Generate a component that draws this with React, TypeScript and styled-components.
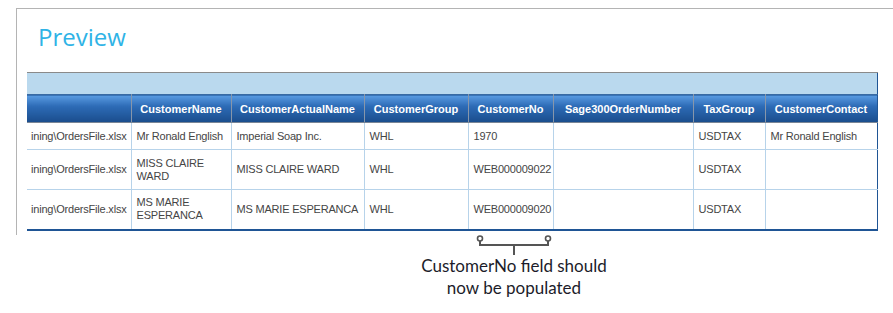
import React from "react";
import styled, { createGlobalStyle } from "styled-components";

const GlobalStyle = createGlobalStyle`
  body {
    margin: 0;
    background: #ffffff;
  }
`;

const Page = styled.div`
  width: 893px;
  height: 313px;
  overflow: hidden;
  background: #fff;
`;

const Frame = styled.div`
  margin: 8px 0 0 16px;
  width: 866px;
  height: 226px;
  border-top: 1px solid #b4b4b4;
  border-left: 1px solid #b4b4b4;
  padding-left: 10px;
`;

const Title = styled.h1`
  margin: 0;
  padding: 12px 0 0 11px;
  height: 51px;
  font-family: "Open Sans", "DejaVu Sans", sans-serif;
  font-weight: 400;
  font-size: 24px;
  line-height: 32px;
  color: #2fb3e6;
`;

const Grid = styled.table`
  border-collapse: collapse;
  table-layout: fixed;
  width: 850px;
  font-family: "Liberation Sans", Arial, sans-serif;
  font-size: 11px;
  border-right: 1px solid #1f5595;
  border-bottom: 2px solid #1f5595;
`;

const BandRow = styled.tr`
  height: 22px;
  background: #bad9ee;
  border-top: 1px solid #8a8a8a;
  border-bottom: 1px solid #3a6ba3;
`;

const HeadCell = styled.th`
  height: 27px;
  padding: 0 4px;
  background: linear-gradient(#5a9ce2 0%, #2d6bb6 40%, #1a4d8c 100%);
  color: #fff;
  font-weight: 700;
  text-align: center;
  white-space: nowrap;
  border-left: 1px solid #8796aa;
  border-bottom: 1px solid #7a8696;
  &:first-child {
    border-left: none;
  }
`;

const Row = styled.tr<{ tall?: boolean }>`
  height: ${({ tall }) => (tall ? 40 : 27)}px;
`;

const Cell = styled.td`
  padding: 0 3px 0 5px;
  color: #454545;
  line-height: 13px;
  letter-spacing: -0.2px;
  vertical-align: middle;
  border-left: 1px solid #b7d3ea;
  border-bottom: 1px solid #b7d3ea;
  &:first-child {
    border-left: none;
  }
`;

const PathCell = styled(Cell)`
  padding: 0 4px 0 0;
  white-space: nowrap;
  text-align: right;
`;

const Annotation = styled.div`
  width: 240px;
  margin-left: 394px;
  display: flex;
  flex-direction: column;
  align-items: center;
`;

const Note = styled.div`
  margin-top: -2px;
  font-family: "Lato", "DejaVu Sans", sans-serif;
  font-size: 17px;
  line-height: 22px;
  color: #1c1c2a;
  text-align: center;
`;

const columns = [
  { title: "", w: 104 },
  { title: "CustomerName", w: 100 },
  { title: "CustomerActualName", w: 133 },
  { title: "CustomerGroup", w: 104 },
  { title: "CustomerNo", w: 85 },
  { title: "Sage300OrderNumber", w: 140 },
  { title: "TaxGroup", w: 72 },
  { title: "CustomerContact", w: 112 },
];

const rows = [
  { tall: false, cells: ["Mr Ronald English", "Imperial Soap Inc.", "WHL", "1970", "", "USDTAX", "Mr Ronald English"] },
  { tall: true, cells: ["MISS CLAIRE WARD", "MISS CLAIRE WARD", "WHL", "WEB000009022", "", "USDTAX", ""] },
  { tall: true, cells: ["MS MARIE ESPERANCA", "MS MARIE ESPERANCA", "WHL", "WEB000009020", "", "USDTAX", ""] },
];

const Bracket = () => (
  <svg width="80" height="22" viewBox="0 0 80 22">
    <g stroke="#555" strokeWidth="2" fill="none">
      <path d="M6 6 V10 H74 V6" />
      <path d="M40 10 V20" />
      <circle cx="6" cy="3.5" r="2.5" fill="#fff" strokeWidth="1.6" />
      <circle cx="74" cy="3.5" r="2.5" fill="#fff" strokeWidth="1.6" />
    </g>
  </svg>
);

export default function App() {
  return (
    <Page>
      <GlobalStyle />
      <Frame>
        <Title>Preview</Title>
        <Grid>
          <colgroup>
            {columns.map((c, i) => (
              <col key={i} style={{ width: c.w }} />
            ))}
          </colgroup>
          <thead>
            <BandRow>
              <td colSpan={columns.length} />
            </BandRow>
            <tr>
              {columns.map((c, i) => (
                <HeadCell key={i}>{c.title}</HeadCell>
              ))}
            </tr>
          </thead>
          <tbody>
            {rows.map((r, i) => (
              <Row key={i} tall={r.tall}>
                <PathCell>ining\OrdersFile.xlsx</PathCell>
                {r.cells.map((v, j) => (
                  <Cell key={j}>{v}</Cell>
                ))}
              </Row>
            ))}
          </tbody>
        </Grid>
      </Frame>
      <Annotation>
        <Bracket />
        <Note>
          CustomerNo field should
          <br />
          now be populated
        </Note>
      </Annotation>
    </Page>
  );
}
